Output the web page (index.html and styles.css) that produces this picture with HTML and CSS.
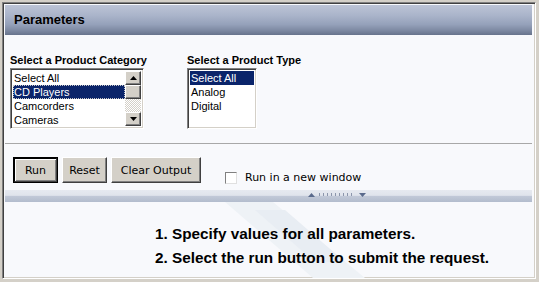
FILE: index.html
```html
<!DOCTYPE html>
<html lang="en">

<head>
    <title>Parameters</title>
    <link rel="stylesheet" href="styles.css">
</head>

<body>
    <!--Outer sunken frame-->
    <div class="frame">
        <!--Title bar-->
        <div class="header">Parameters</div>

        <!--Parameter pickers-->
        <div class="params">
            <div class="param param-category">
                <div class="param-label">Select a Product Category</div>
                <div class="listbox list-category">
                    <div class="items">
                        <div class="item">Select All</div>
                        <div class="item selected focused">CD Players</div>
                        <div class="item">Camcorders</div>
                        <div class="item">Cameras</div>
                    </div>
                    <div class="scrollbar">
                        <div class="sb-btn">
                            <svg width="7" height="4" viewBox="0 0 7 4"><path d="M3.5 0 L7 4 L0 4 Z" fill="#000"/></svg>
                        </div>
                        <div class="sb-thumb"></div>
                        <div class="sb-track"></div>
                        <div class="sb-btn">
                            <svg width="7" height="4" viewBox="0 0 7 4"><path d="M0 0 L7 0 L3.5 4 Z" fill="#000"/></svg>
                        </div>
                    </div>
                </div>
            </div>
            <div class="param">
                <div class="param-label">Select a Product Type</div>
                <div class="listbox list-type">
                    <div class="items">
                        <div class="item selected">Select All</div>
                        <div class="item">Analog</div>
                        <div class="item">Digital</div>
                    </div>
                </div>
            </div>
        </div>

        <!--Buttons row-->
        <div class="actions">
            <button class="btn btn-default">Run</button>
            <button class="btn btn-reset">Reset</button>
            <button class="btn btn-clear">Clear Output</button>
            <label class="newwin"><span class="checkbox"></span>Run in a new window</label>
        </div>

        <!--Splitter-->
        <div class="splitter">
            <div class="grip">
                <svg width="7" height="4" viewBox="0 0 7 4"><path d="M3.5 0 L7 4 L0 4 Z" fill="#5a6a8c"/></svg>
                <span class="dots"></span>
                <svg width="7" height="4" viewBox="0 0 7 4"><path d="M0 0 L7 0 L3.5 4 Z" fill="#5a6a8c"/></svg>
            </div>
        </div>

        <!--Output area-->
        <div class="output">
            <svg class="watermark" width="200" height="76" viewBox="0 0 200 76">
                <path d="M30 0 L78 0 L170 76 L118 76 Z" fill="#eef2f6"/>
                <path d="M60 8 L90 8 L150 60 L120 60 Z" fill="#e8edf3"/>
            </svg>
            <ol class="steps">
                <li>1. Specify values for all parameters.</li>
                <li>2. Select the run button to submit the request.</li>
            </ol>
        </div>
    </div>
</body>

</html>
```

FILE: styles.css
```css
/*page*/
body {
    margin: 0;
    padding: 2px 3px 3px 2px;
    background-color: #d4d0c8;
    width: 539px;
    height: 282px;
    box-sizing: border-box;
    font-family: "Liberation Sans", Arial, sans-serif;
}

/*sunken frame*/
.frame {
    height: 277px;
    box-sizing: border-box;
    border-top: 1px solid #808080;
    border-left: 1px solid #808080;
    border-right: 1px solid #ffffff;
    border-bottom: 1px solid #ffffff;
    box-shadow: inset 1px 1px 0 #404040, inset -1px -1px 0 #d4d0c8;
    background-color: #f8f9fc;
    padding: 2px 3px 2px 2px;
    display: flex;
    flex-direction: column;
    overflow: hidden;
}

/*title bar*/
.header {
    height: 30px;
    flex-shrink: 0;
    background: linear-gradient(to bottom, #bcc4d6 0%, #aab4ca 35%, #95a1ba 65%, #7d89a2 85%, #67738c 100%);
    font-weight: bold;
    font-size: 13px;
    color: #000;
    line-height: 30px;
    padding-left: 9px;
}

/*parameter pickers*/
.params {
    display: flex;
    padding: 19px 0 0 5px;
    height: 109px;
    flex-shrink: 0;
    box-sizing: border-box;
    border-bottom: 1px solid #a8a8a8;
}

.param-category {
    width: 177px;
}

.param-label {
    font-weight: bold;
    font-size: 11px;
    line-height: 13px;
    height: 14px;
}

.listbox {
    display: flex;
    height: 61px;
    box-sizing: border-box;
    background-color: #fff;
    border-top: 1px solid #808080;
    border-left: 1px solid #808080;
    border-right: 1px solid #fff;
    border-bottom: 1px solid #fff;
    box-shadow: inset 1px 1px 0 #404040, inset -1px -1px 0 #d4d0c8;
    padding: 2px;
}

.list-category {
    width: 134px;
}

.list-type {
    width: 70px;
}

.items {
    flex: 1;
}

.item {
    font-size: 11px;
    height: 14px;
    line-height: 14px;
    padding-left: 1px;
    color: #000;
    box-sizing: border-box;
}

.item.selected {
    background-color: #0a246a;
    color: #fff;
}

.item.focused {
    outline: 1px dotted #c8c8c8;
    outline-offset: -1px;
}

/*scrollbar*/
.scrollbar {
    width: 16px;
    display: flex;
    flex-direction: column;
}

.sb-btn,
.sb-thumb {
    height: 14px;
    box-sizing: border-box;
    background-color: #d4d0c8;
    border-top: 1px solid #fff;
    border-left: 1px solid #fff;
    border-right: 1px solid #404040;
    border-bottom: 1px solid #404040;
    box-shadow: inset -1px -1px 0 #808080;
    display: flex;
    align-items: center;
    justify-content: center;
}

.sb-track {
    flex: 1;
    background-color: #eae8e4;
    background-image: repeating-conic-gradient(#d4d0c8 0 25%, #ffffff 0 50%);
    background-size: 2px 2px;
}

/*buttons row*/
.actions {
    display: flex;
    align-items: flex-start;
    gap: 4px;
    padding: 13px 0 0 8px;
    height: 46px;
    flex-shrink: 0;
    box-sizing: border-box;
}

.btn {
    height: 26px;
    margin: 0;
    padding: 0;
    font-family: "DejaVu Sans", Verdana, sans-serif;
    font-size: 11px;
    color: #000;
    background-color: #d4d0c8;
    border-top: 1px solid #fff;
    border-left: 1px solid #fff;
    border-right: 1px solid #404040;
    border-bottom: 1px solid #404040;
    box-shadow: inset -1px -1px 0 #808080;
}

.btn-default {
    width: 45px;
    border-width: 2px;
    border-color: #000 #404040 #404040 #000;
    outline: 1px solid #000;
    outline-offset: -1px;
    box-shadow: inset 1px 1px 0 #fff, inset -1px -1px 0 #808080;
}

.btn-reset {
    width: 45px;
}

.btn-clear {
    width: 90px;
}

.newwin {
    display: flex;
    align-items: center;
    gap: 8px;
    margin: 14px 0 0 20px;
    font-family: "DejaVu Sans", Verdana, sans-serif;
    font-size: 11px;
    color: #000;
}

.checkbox {
    width: 12px;
    height: 12px;
    box-sizing: border-box;
    background-color: #fff;
    border-top: 1px solid #808080;
    border-left: 1px solid #808080;
    border-right: 1px solid #e0e0e0;
    border-bottom: 1px solid #e0e0e0;
}

/*splitter*/
.splitter {
    height: 12px;
    flex-shrink: 0;
    background: linear-gradient(to bottom, #e6e9f0 0%, #e0e4ec 45%, #c2c9d8 50%, #b3bccd 100%);
    display: flex;
    justify-content: center;
}

.grip {
    display: flex;
    align-items: center;
    gap: 4px;
    height: 9px;
    margin-left: 136px;
}

.dots {
    width: 36px;
    height: 3px;
    background-image: repeating-linear-gradient(to right, #8c96ac 0 1px, transparent 1px 4px);
}

/*output area*/
.output {
    flex: 1;
    position: relative;
}

.watermark {
    position: absolute;
    left: 190px;
    top: 0;
}

.steps {
    position: relative;
    list-style: none;
    margin: 0;
    padding: 20px 0 0 150px;
    font-weight: bold;
    font-size: 15.3px;
    line-height: 24px;
    color: #000;
}
```
